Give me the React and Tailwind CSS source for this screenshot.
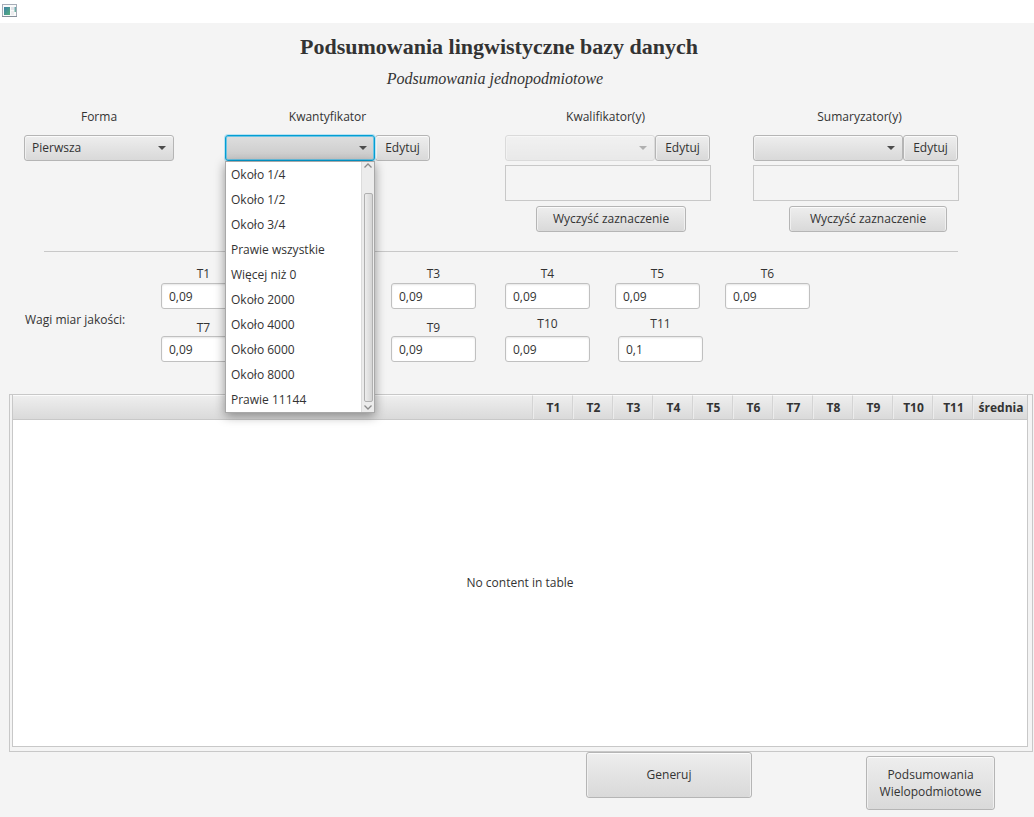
import React from "react";
import clsx from "clsx";

const BUTTON =
  "rounded-[3px] border border-[#b5b5b5] bg-linear-to-b from-[#eeeeee] to-[#d9d9d9] text-center shadow-[inset_0_1px_0_#fbfbfb,inset_1px_0_0_#f0f0f0,inset_-1px_0_0_#f0f0f0]";

const OPTIONS = [
  "Około 1/4",
  "Około 1/2",
  "Około 3/4",
  "Prawie wszystkie",
  "Więcej niż 0",
  "Około 2000",
  "Około 4000",
  "Około 6000",
  "Około 8000",
  "Prawie 11144",
];

const MEASURES = ["T1", "T2", "T3", "T4", "T5", "T6", "T7", "T8", "T9", "T10", "T11"];

function Button({ className, children }) {
  return (
    <button type="button" className={clsx(BUTTON, className)}>
      {children}
    </button>
  );
}

function ComboBox({ id, options = [], focused, disabled }) {
  return (
    <div className={clsx("relative w-[150px] shrink-0", disabled && "opacity-40")}>
      <select
        id={id}
        disabled={disabled}
        className={clsx(
          "block h-[26px] w-full appearance-none rounded-[3px] border bg-linear-to-b pr-6 pl-[7px] outline-none",
          focused
            ? "border-[#039ed3] from-[#dedede] to-[#c9c9c9] shadow-[inset_0_0_0_1px_#6cc4e4,0_0_0_1px_#b9e2f1]"
            : "border-[#b5b5b5] from-[#eeeeee] to-[#d9d9d9] shadow-[inset_0_1px_0_#fbfbfb,inset_1px_0_0_#f0f0f0]"
        )}
      >
        {options.map((option) => (
          <option key={option}>{option}</option>
        ))}
      </select>
      <svg
        viewBox="0 0 8 4"
        className="pointer-events-none absolute top-[11px] right-2 h-1 w-2 fill-[#4c4c4c]"
        aria-hidden="true"
      >
        <path d="M0 0h8L4 4z" />
      </svg>
    </div>
  );
}

function Chevron({ d }) {
  return (
    <svg viewBox="0 0 8 5" className="h-[5px] w-2" fill="none" stroke="#8c8c8c" strokeWidth="1.3" aria-hidden="true">
      <path d={d} />
    </svg>
  );
}

function Popup() {
  return (
    <div className="absolute top-full left-0 z-10 flex w-[150px] border border-[#a8a8a8] bg-white shadow-[0_3px_10px_rgba(0,0,0,0.4)]">
      <ul role="listbox" aria-label="Kwantyfikator" className="flex-1">
        {OPTIONS.map((option) => (
          <li key={option} role="option" aria-selected="false" className="h-[25px] pl-[5px] leading-[25px] whitespace-nowrap">
            {option}
          </li>
        ))}
      </ul>
      <div className="flex w-[13px] flex-col items-center border-l border-[#dcdcdc] bg-[#ececec] pt-px pb-[2px]">
        <Chevron d="M0.5 4.5L4 1l3.5 3.5" />
        <div className="mt-[25px] mb-[3px] w-[9px] flex-1 rounded-[2px] border border-[#b0b0b0] bg-linear-to-r from-[#ededed] to-[#d4d4d4]" />
        <Chevron d="M0.5 0.5L4 4l3.5-3.5" />
      </div>
    </div>
  );
}

function Filter({ id, label, labelWidth, children }) {
  return (
    <div className="flex flex-col items-start">
      <label htmlFor={id} className={clsx("mb-[10px] block text-center leading-4", labelWidth)}>
        {label}
      </label>
      {children}
    </div>
  );
}

function Weight({ name, value = "0,09", gap }) {
  return (
    <div className="flex w-[85px] flex-col justify-end">
      <label htmlFor={name} className={clsx("block text-center leading-4", gap)}>
        {name}
      </label>
      <input
        id={name}
        defaultValue={value}
        className="h-[26px] w-full rounded-[3px] border border-[#c0c0c0] bg-white px-[7px] shadow-[inset_0_1px_2px_#e6e6e6] outline-none"
      />
    </div>
  );
}

function SelectionBox({ label }) {
  return (
    <textarea
      readOnly
      aria-label={label}
      className="mt-1 block h-9 w-[206px] resize-none border border-[#c8c8c8] bg-transparent outline-none"
    />
  );
}

function ResultsTable() {
  return (
    <div className="ml-[9px] mr-px border border-[#c8c8c8] bg-[#f4f4f4] pr-1 pb-1 pl-[2px]">
      <table className="w-full table-fixed border-separate border-spacing-0 border-x border-b border-[#c8c8c8] bg-white">
        <thead>
          <tr className="h-[25px] bg-linear-to-b from-[#efefef] to-[#d9d9d9]">
            <th aria-label="Podsumowanie" className="border-t border-r border-b border-t-[#fbfbfb] border-r-[#d4d4d4] border-b-[#c8c8c8]" />
            {MEASURES.map((name) => (
              <th
                key={name}
                className="w-10 border-t border-r border-b border-t-[#fbfbfb] border-r-[#d4d4d4] border-b-[#c8c8c8] py-0 pr-0 pl-[2px] text-center font-bold shadow-[inset_1px_0_0_#ececec]"
              >
                {name}
              </th>
            ))}
            <th className="w-[54px] border-t border-b border-t-[#fbfbfb] border-b-[#c8c8c8] py-0 pr-0 pl-[2px] text-center font-bold shadow-[inset_1px_0_0_#ececec]">
              średnia
            </th>
          </tr>
        </thead>
        <tbody>
          <tr>
            <td colSpan={13} className="h-[326px] p-0 text-center">
              No content in table
            </td>
          </tr>
        </tbody>
      </table>
    </div>
  );
}

export default function App() {
  return (
    <div className="min-h-screen bg-[#f4f4f4] font-['Open_Sans','Noto_Sans',sans-serif] text-[12px] text-[#333333]">
      <header className="flex h-[23px] items-start bg-white pt-1 pl-[2px]">
        <svg viewBox="0 0 15 13" className="h-[13px] w-[15px]" aria-hidden="true">
          <defs>
            <linearGradient id="pane" x1="0" y1="0" x2="1" y2="1">
              <stop offset="0" stopColor="#3d7fa6" />
              <stop offset="1" stopColor="#55b07c" />
            </linearGradient>
          </defs>
          <rect x="0.5" y="0.5" width="14" height="12" fill="#fafafa" stroke="#a6adb8" />
          <path d="M0 12.5h15" stroke="#868e99" />
          <rect x="2" y="3" width="6" height="8" fill="url(#pane)" />
          <rect x="9" y="3" width="3" height="3" fill="#e2e4e8" />
          <rect x="9" y="7" width="3" height="4" fill="#ececee" />
          <rect x="12.5" y="3" width="1.5" height="5" fill="url(#pane)" opacity="0.8" />
        </svg>
      </header>

      <main>
        <div className="pr-9 text-center font-['Liberation_Serif',serif]">
          <h1 className="pt-3 text-[22px] leading-6 font-bold">Podsumowania lingwistyczne bazy danych</h1>
          <p className="pt-2 pr-2 text-[16px] leading-6 italic">Podsumowania jednopodmiotowe</p>
        </div>

        <section className="grid grid-cols-[201fr_280fr_248fr_281fr] pt-[18px] pl-6">
          <Filter id="forma" label="Forma" labelWidth="w-[150px]">
            <ComboBox id="forma" options={["Pierwsza"]} />
          </Filter>

          <Filter id="kwantyfikator" label="Kwantyfikator" labelWidth="w-[205px]">
            <div className="relative flex">
              <ComboBox id="kwantyfikator" focused />
              <Button className="h-[26px] w-[55px]">Edytuj</Button>
              <Popup />
            </div>
          </Filter>

          <Filter id="kwalifikator" label="Kwalifikator(y)" labelWidth="w-[201px]">
            <div className="flex">
              <ComboBox id="kwalifikator" disabled />
              <Button className="h-[26px] w-[55px]">Edytuj</Button>
            </div>
            <SelectionBox label="Wybrane kwalifikatory" />
            <Button className="mt-[5px] ml-[31px] h-[26px] w-[150px]">Wyczyść zaznaczenie</Button>
          </Filter>

          <Filter id="sumaryzator" label="Sumaryzator(y)" labelWidth="w-[213px]">
            <div className="flex">
              <ComboBox id="sumaryzator" />
              <Button className="h-[26px] w-[55px]">Edytuj</Button>
            </div>
            <SelectionBox label="Wybrane sumaryzatory" />
            <Button className="mt-[5px] ml-9 h-[26px] w-[158px]">Wyczyść zaznaczenie</Button>
          </Filter>
        </section>

        <hr className="mt-[19px] mr-[76px] ml-11 border-t border-[#c8c8c8]" />

        <section className="flex items-center pt-[14px] pl-[25px]">
          <h2 className="w-[136px] shrink-0 pt-3">Wagi miar jakości:</h2>
          <div className="flex-1">
            <div className="grid grid-cols-[115fr_115fr_114fr_110fr_110fr_309fr]">
              <Weight name="T1" gap="mb-px" />
              <Weight name="T2" gap="mb-px" />
              <Weight name="T3" gap="mb-px" />
              <Weight name="T4" gap="mb-px" />
              <Weight name="T5" gap="mb-px" />
              <Weight name="T6" gap="mb-px" />
            </div>
            <div className="grid grid-cols-[115fr_115fr_114fr_113fr_416fr] pt-[7px]">
              <Weight name="T7" />
              <Weight name="T8" />
              <Weight name="T9" />
              <Weight name="T10" gap="mb-1" />
              <Weight name="T11" value="0,1" gap="mb-1" />
            </div>
          </div>
        </section>

        <div className="pt-8">
          <ResultsTable />
        </div>

        <div className="flex items-start justify-end gap-[114px] pr-[39px]">
          <Button className="h-[46px] w-[166px]">Generuj</Button>
          <Button className="mt-1 h-[54px] w-[129px] leading-[17px]">
            Podsumowania Wielopodmiotowe
          </Button>
        </div>
      </main>
    </div>
  );
}
